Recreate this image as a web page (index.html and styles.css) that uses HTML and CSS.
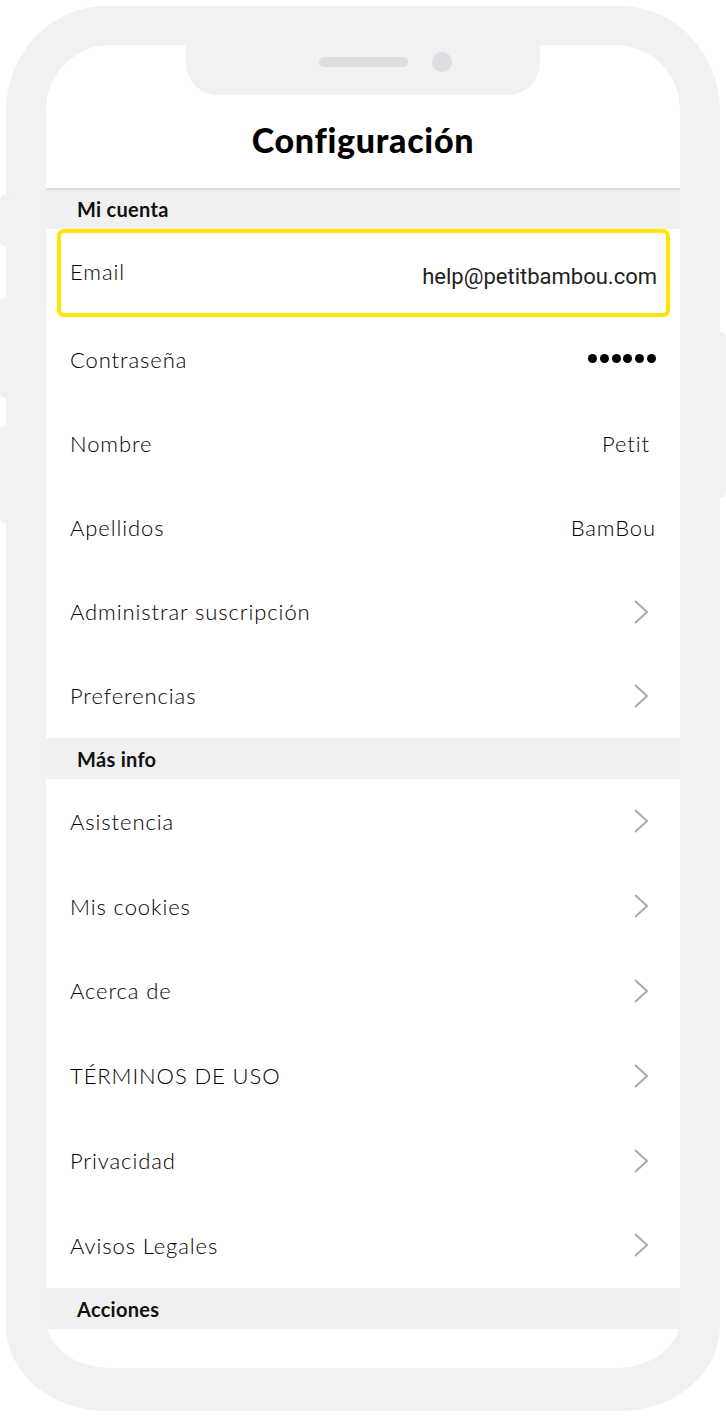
FILE: index.html
```html
<!DOCTYPE html>
<html lang="es">
<head>
<meta charset="utf-8">
<title>Configuración</title>
<link rel="stylesheet" href="styles.css">
</head>
<body>
<div class="phone">
  <span class="btn btn-l1"></span>
  <span class="btn btn-l2"></span>
  <span class="btn btn-l3"></span>
  <span class="btn btn-r1"></span>
  <div class="screen">
    <div class="notch">
      <span class="speaker"></span>
      <span class="camera"></span>
    </div>
    <header class="header">
      <h1 class="title">Configuración</h1>
    </header>

    <div class="section">Mi cuenta</div>
    <div class="row row-email">
      <span class="label">Email</span>
      <span class="value value-email">help@petitbambou.com</span>
    </div>
    <div class="row">
      <span class="label">Contraseña</span>
      <span class="dots"><i></i><i></i><i></i><i></i><i></i><i></i></span>
    </div>
    <div class="row">
      <span class="label">Nombre</span>
      <span class="value value-name">Petit</span>
    </div>
    <div class="row">
      <span class="label">Apellidos</span>
      <span class="value">BamBou</span>
    </div>
    <div class="row">
      <span class="label">Administrar suscripción</span>
      <svg class="chev" viewBox="0 0 14 24" width="14" height="24"><polyline points="1,1 13,12 1,23"/></svg>
    </div>
    <div class="row">
      <span class="label">Preferencias</span>
      <svg class="chev" viewBox="0 0 14 24" width="14" height="24"><polyline points="1,1 13,12 1,23"/></svg>
    </div>

    <div class="section">Más info</div>
    <div class="row row-b">
      <span class="label">Asistencia</span>
      <svg class="chev" viewBox="0 0 14 24" width="14" height="24"><polyline points="1,1 13,12 1,23"/></svg>
    </div>
    <div class="row row-b">
      <span class="label">Mis cookies</span>
      <svg class="chev" viewBox="0 0 14 24" width="14" height="24"><polyline points="1,1 13,12 1,23"/></svg>
    </div>
    <div class="row row-b">
      <span class="label">Acerca de</span>
      <svg class="chev" viewBox="0 0 14 24" width="14" height="24"><polyline points="1,1 13,12 1,23"/></svg>
    </div>
    <div class="row row-b">
      <span class="label">TÉRMINOS DE USO</span>
      <svg class="chev" viewBox="0 0 14 24" width="14" height="24"><polyline points="1,1 13,12 1,23"/></svg>
    </div>
    <div class="row row-b">
      <span class="label">Privacidad</span>
      <svg class="chev" viewBox="0 0 14 24" width="14" height="24"><polyline points="1,1 13,12 1,23"/></svg>
    </div>
    <div class="row row-b">
      <span class="label">Avisos Legales</span>
      <svg class="chev" viewBox="0 0 14 24" width="14" height="24"><polyline points="1,1 13,12 1,23"/></svg>
    </div>

    <div class="section">Acciones</div>
  </div>
</div>
</body>
</html>
```

FILE: styles.css
```css
* { box-sizing: border-box; }

html, body {
  margin: 0;
  padding: 0;
  background: #ffffff;
}

body {
  font-family: Lato, "Noto Sans", sans-serif;
  color: #1e1e1e;
}

.phone {
  position: relative;
  width: 714px;
  height: 1405px;
  margin: 6px 0 0 6px;
  padding: 39px 40px 0 40px;
  background: #f1f1f3;
  border-radius: 100px 100px 100px 100px / 105px 105px 85px 85px;
}

.btn {
  position: absolute;
  width: 10px;
  background: #f1f1f3;
  border-radius: 5px;
}
.btn-l1 { left: -6px; top: 189px; height: 52px; }
.btn-l2 { left: -6px; top: 291px; height: 101px; }
.btn-l3 { left: -6px; top: 419px; height: 98px; }
.btn-r1 { right: -6px; top: 326px; height: 166px; }

.screen {
  position: relative;
  width: 634px;
  height: 1323px;
  background: #ffffff;
  overflow: hidden;
  border-radius: 65px 65px 65px 65px / 65px 65px 48px 48px;
}

.notch {
  position: absolute;
  top: 0;
  left: 140px;
  width: 354px;
  height: 50px;
  background: #f1f1f3;
  border-radius: 0 0 32px 32px;
  display: flex;
  align-items: center;
  justify-content: center;
  gap: 24px;
  padding: 0 0 16px 44px;
  z-index: 2;
}

.speaker {
  width: 89px;
  height: 10px;
  border-radius: 5px;
  background: #dddde2;
}

.camera {
  width: 20px;
  height: 20px;
  border-radius: 50%;
  background: #dddde2;
}

.header {
  position: relative;
  height: 143px;
  padding-top: 77px;
  background: #ffffff;
  box-shadow: 0 1px 3px rgba(0, 0, 0, 0.18);
  z-index: 1;
}

.title {
  margin: 0;
  text-align: center;
  font-family: Lato, sans-serif;
  font-weight: 900;
  font-size: 34px;
  letter-spacing: 0.7px;
  line-height: 36px;
  color: #000000;
}

.section {
  height: 41px;
  line-height: 42px;
  padding-left: 31px;
  background: #f0f0f0;
  font-family: Lato, sans-serif;
  font-weight: 700;
  font-size: 20px;
  letter-spacing: 0.3px;
  color: #111111;
}

.row {
  height: 84.2px;
  display: flex;
  align-items: center;
  justify-content: space-between;
  padding: 0 24px;
}

.row-b { height: 84.8px; }

.label {
  font-family: Lato, sans-serif;
  font-weight: 300;
  font-size: 22px;
  letter-spacing: 0.9px;
  color: #000000;
  margin-top: 0;
}

.value {
  font-family: Lato, sans-serif;
  font-weight: 300;
  font-size: 22px;
  letter-spacing: 0.9px;
  color: #000000;
  margin-top: 0;
}

.value-name { margin-right: 6px; }

.row-email {
  height: 88px;
  margin: 0 10px 0 11px;
  padding: 0 9px;
  border: 4px solid #ffe500;
  border-radius: 7px;
}

.row-email .label { margin-top: -3px; }

.value-email {
  font-family: Roboto, "Liberation Sans", sans-serif;
  font-weight: 400;
  font-size: 22px;
  letter-spacing: 0;
  color: #222222;
  margin-top: 6px;
}

.dots {
  display: flex;
  gap: 2.8px;
}
.dots i {
  display: block;
  width: 9px;
  height: 9px;
  border-radius: 50%;
  background: #000000;
  margin-top: -2px;
}

.chev {
  margin-right: 8px;
  display: block;
}
.chev polyline {
  fill: none;
  stroke: #ababab;
  stroke-width: 2;
}
```
